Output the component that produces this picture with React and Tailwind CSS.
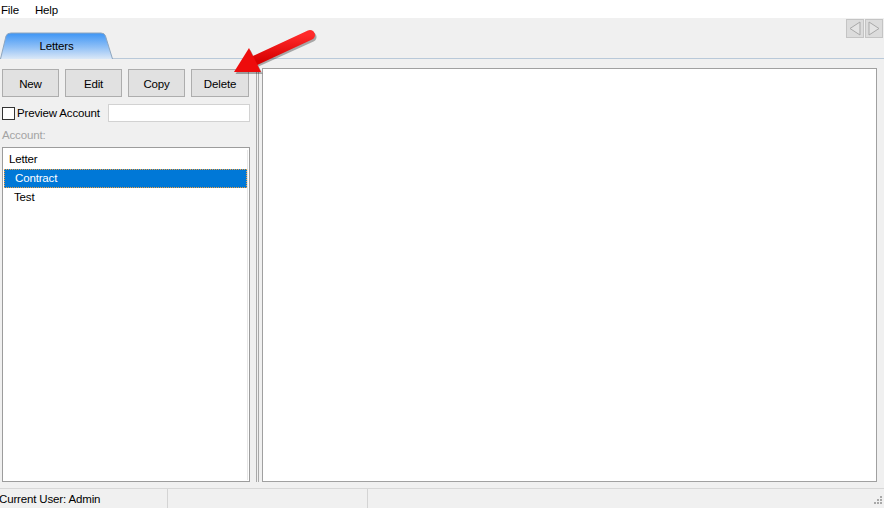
import React from "react";

const items = [
  { label: "Letter", indent: false },
  { label: "Contract", indent: true, selected: true },
  { label: "Test", indent: true },
];

function ToolButton({ children, w }) {
  return (
    <button
      type="button"
      className={`${w} h-[28px] pt-[3px] bg-[#e1e1e1] border border-[#adadad] text-black flex items-center justify-center`}
    >
      {children}
    </button>
  );
}

function NavArrow({ dir }) {
  return (
    <div className="w-[18px] h-[19px] bg-[#dcdcdc] border border-[#c4c4c4] flex items-center justify-center">
      <svg width="14" height="15" viewBox="0 0 14 15">
        {dir === "left" ? (
          <polygon points="12,1 12,14 2,7.5" fill="#e4e4e4" stroke="#a9a9a9" strokeWidth="1" />
        ) : (
          <polygon points="2,1 2,14 12,7.5" fill="#e4e4e4" stroke="#a9a9a9" strokeWidth="1" />
        )}
      </svg>
    </div>
  );
}

export default function App() {
  return (
    <div
      className="relative w-[884px] h-[508px] overflow-hidden bg-[#f0f0f0] flex flex-col text-[11.5px] tracking-[-0.15px] text-black"
      style={{ fontFamily: '"Liberation Sans", Arial, sans-serif' }}
    >
      {/* menu bar */}
      <div className="h-[18px] bg-white flex items-center pt-[3px]">
        <span className="pl-[1px]">File</span>
        <span className="ml-[16px]">Help</span>
      </div>

      {/* tab strip */}
      <div className="relative h-[41px] border-b border-[#b9c9d9] flex items-end justify-between">
        <div className="relative w-[113px] h-[27px] -mb-[1px]">
          <svg width="113" height="27" viewBox="0 0 113 27" className="absolute inset-0">
            <defs>
              <linearGradient id="tabfill" x1="0" y1="0" x2="0" y2="1">
                <stop offset="0" stopColor="#3d95f5" />
                <stop offset="0.55" stopColor="#90c0f6" />
                <stop offset="1" stopColor="#dbe8f7" />
              </linearGradient>
            </defs>
            <path
              d="M0.5,27 L6,4 Q7,1 11,1 L101,1 Q104.5,1 105.5,4 L112.5,27"
              fill="url(#tabfill)"
              stroke="#8ea6bf"
              strokeWidth="1"
            />
          </svg>
          <span className="absolute inset-0 flex items-center justify-center pt-[2px]">Letters</span>
        </div>
        <div className="flex gap-[1px] self-start mt-[1px] mr-[1px]">
          <NavArrow dir="left" />
          <NavArrow dir="right" />
        </div>
      </div>

      {/* main area */}
      <div className="flex-1 flex min-h-0">
        <div className="w-[250px] pl-[2px] pt-[10px] pb-[6px] flex flex-col">
          <div className="flex gap-[6px]">
            <ToolButton w="w-[57px]">New</ToolButton>
            <ToolButton w="w-[57px]">Edit</ToolButton>
            <ToolButton w="w-[57px]">Copy</ToolButton>
            <ToolButton w="w-[58px]">Delete</ToolButton>
          </div>

          <div className="mt-[7px] h-[18px] flex items-center">
            <span className="w-[13px] h-[13px] border border-[#333] bg-white" />
            <span className="ml-[2px] pt-[2px]">Preview Account</span>
            <input
              type="text"
              readOnly
              className="ml-auto w-[142px] h-[18px] border border-[#d2d2d2] bg-white outline-none"
            />
          </div>

          <div className="mt-[6px] text-[#a3a3a3] leading-[14px]">Account:</div>

          <div className="mt-[5px] flex-1 border border-[#9c9c9c] bg-white pt-[2px] pl-[1px] pr-[1px] relative">
            <div className="absolute right-[1px] top-[2px] bottom-[1px] w-[1px] bg-[#e6e6e6]" />
            {items.map((it) => (
              <div
                key={it.label}
                className={`h-[19px] flex items-center ${it.indent ? "pl-[10px]" : "pl-[5px]"} ${
                  it.selected
                    ? "bg-[#0078d7] text-white border border-dotted border-[#f0a040] mr-[1px]"
                    : ""
                }`}
              >
                {it.label}
              </div>
            ))}
          </div>
        </div>

        {/* splitter */}
        <div className="w-[12px] flex pl-[6px] gap-[1px] pt-[9px] pb-[6px]">
          <div className="w-[1px] bg-[#a9a9a9]" />
          <div className="w-[1px] bg-[#a9a9a9]" />
        </div>

        <div className="w-[615px] pt-[9px] pb-[6px] flex flex-col">
          <div className="flex-1 bg-white border border-[#a0a0a0]" />
        </div>
      </div>

      {/* status bar */}
      <div className="h-[20px] border-t border-[#d7d7d7] flex items-center relative">
        <div className="w-[169px] -ml-[1px] pt-[2px] h-full flex items-center border-r border-[#d4d4d4]">
          Current User: Admin
        </div>
        <div className="w-[200px] h-full border-r border-[#d4d4d4]" />
        <svg width="10" height="10" viewBox="0 0 10 10" className="absolute right-[2px] bottom-[2px]">
          {[
            [8, 0], [8, 3], [5, 3], [8, 6], [5, 6], [2, 6],
          ].map(([x, y]) => (
            <rect key={`${x}-${y}`} x={x} y={y} width="2" height="2" fill="#a8a8a8" />
          ))}
        </svg>
      </div>

      {/* red callout arrow over the Delete button */}
      <svg
        width="884"
        height="508"
        viewBox="0 0 884 508"
        className="absolute inset-0 pointer-events-none"
      >
        <defs>
          <linearGradient id="arrowfill" x1="0" y1="0" x2="0" y2="1">
            <stop offset="0" stopColor="#ff2a2a" />
            <stop offset="1" stopColor="#d80000" />
          </linearGradient>
        </defs>
        <g transform="translate(1.5,2)" opacity="0.3">
          <line x1="310" y1="35" x2="255" y2="60" stroke="#000" strokeWidth="10" strokeLinecap="round" />
          <polygon points="234,72 249,48 261,72" fill="#000" />
        </g>
        <line x1="310" y1="35" x2="254" y2="61" stroke="url(#arrowfill)" strokeWidth="10" strokeLinecap="round" />
        <polygon points="234,72 249,48 261,72" fill="#ee0c0c" />
      </svg>
    </div>
  );
}
